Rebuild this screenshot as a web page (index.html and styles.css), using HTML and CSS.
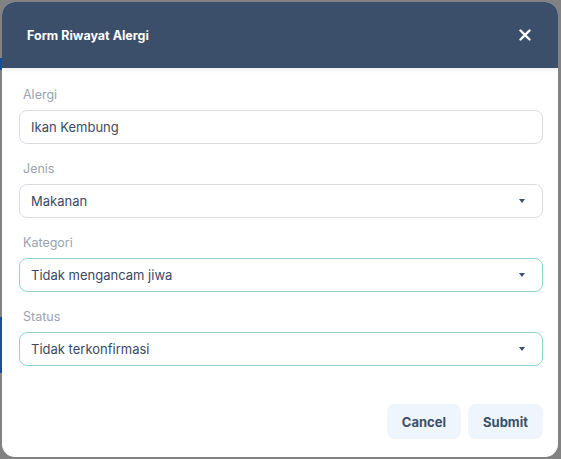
FILE: index.html
```html
<!DOCTYPE html>
<html lang="id">
<head>
<meta charset="utf-8">
<title>Form Riwayat Alergi</title>
<link rel="stylesheet" href="styles.css">
</head>
<body>
<div class="backdrop">
  <div class="modal">
    <div class="modal-header">
      <h2 class="modal-title">Form Riwayat Alergi</h2>
      <button class="close-btn" aria-label="Tutup">
        <svg width="12" height="12" viewBox="0 0 12 12"><path d="M1.5 1.5 L10.5 10.5 M10.5 1.5 L1.5 10.5" stroke="#ffffff" stroke-width="2.4" stroke-linecap="round"/></svg>
      </button>
    </div>
    <div class="modal-body">
      <div class="group">
        <label class="label">Alergi</label>
        <div class="field">Ikan Kembung</div>
      </div>
      <div class="group">
        <label class="label">Jenis</label>
        <div class="field select">Makanan<span class="caret"></span></div>
      </div>
      <div class="group">
        <label class="label">Kategori</label>
        <div class="field select valid">Tidak mengancam jiwa<span class="caret"></span></div>
      </div>
      <div class="group">
        <label class="label">Status</label>
        <div class="field select valid">Tidak terkonfirmasi<span class="caret"></span></div>
      </div>
    </div>
    <div class="modal-footer">
      <button class="btn">Cancel</button>
      <button class="btn">Submit</button>
    </div>
  </div>
</div>
</body>
</html>
```
FILE: styles.css
```css
html, body {
  margin: 0;
  padding: 0;
}
body {
  width: 561px;
  height: 459px;
  overflow: hidden;
  background: #828282;
  font-family: "Inter", "Noto Sans", sans-serif;
}
.backdrop {
  padding: 2px 0 0 2px;
  height: 457px;
  box-sizing: border-box;
  background:
    linear-gradient(#1d4c98, #1d4c98) 0 58px / 2px 12px no-repeat,
    linear-gradient(#1d4c98, #1d4c98) 0 317px / 2px 56px no-repeat;
}
.modal {
  width: 556px;
  height: 455px;
  background: #ffffff;
  border-radius: 13px;
  overflow: hidden;
  display: flex;
  flex-direction: column;
}
.modal-header {
  height: 66px;
  flex: none;
  background: #3c4f6a;
  display: flex;
  align-items: center;
  justify-content: space-between;
  padding: 0 27px 0 25px;
  box-shadow: 0 2px 4px rgba(0, 0, 0, 0.07);
  position: relative;
}
.modal-title {
  margin: 0;
  color: #ffffff;
  font-size: 12.5px;
  font-weight: 700;
  letter-spacing: 0;
}
.close-btn {
  background: none;
  border: 0;
  padding: 0;
  width: 12px;
  height: 12px;
  display: flex;
}
.modal-body {
  padding: 18px 15px 0 17px;
  display: flex;
  flex-direction: column;
  gap: 16px;
}
.group {
  display: flex;
  flex-direction: column;
}
.label {
  font-size: 12.5px;
  line-height: 18px;
  color: #9ba2ae;
  margin: 0 0 6px 4px;
}
.field {
  height: 34px;
  box-sizing: border-box;
  border: 1px solid #d9dce3;
  border-radius: 8px;
  padding: 0 12px 0 11px;
  display: flex;
  align-items: center;
  justify-content: space-between;
  font-size: 13px;
  color: #3a4a63;
}
.field.valid {
  border-color: #8bd3cf;
}
.caret {
  width: 0;
  height: 0;
  border-left: 3.5px solid transparent;
  border-right: 3.5px solid transparent;
  border-top: 4px solid #3c4f6a;
  margin-right: 5px;
}
.modal-footer {
  margin-top: auto;
  padding: 0 15px 18px 0;
  display: flex;
  justify-content: flex-end;
  gap: 7px;
}
.btn {
  height: 35px;
  min-width: 74px;
  padding: 0 15px;
  border: 0;
  border-radius: 8px;
  background: #eff5fd;
  color: #3c4f6a;
  font-family: "Inter", "Noto Sans", sans-serif;
  font-size: 13px;
  font-weight: 700;
}
```
